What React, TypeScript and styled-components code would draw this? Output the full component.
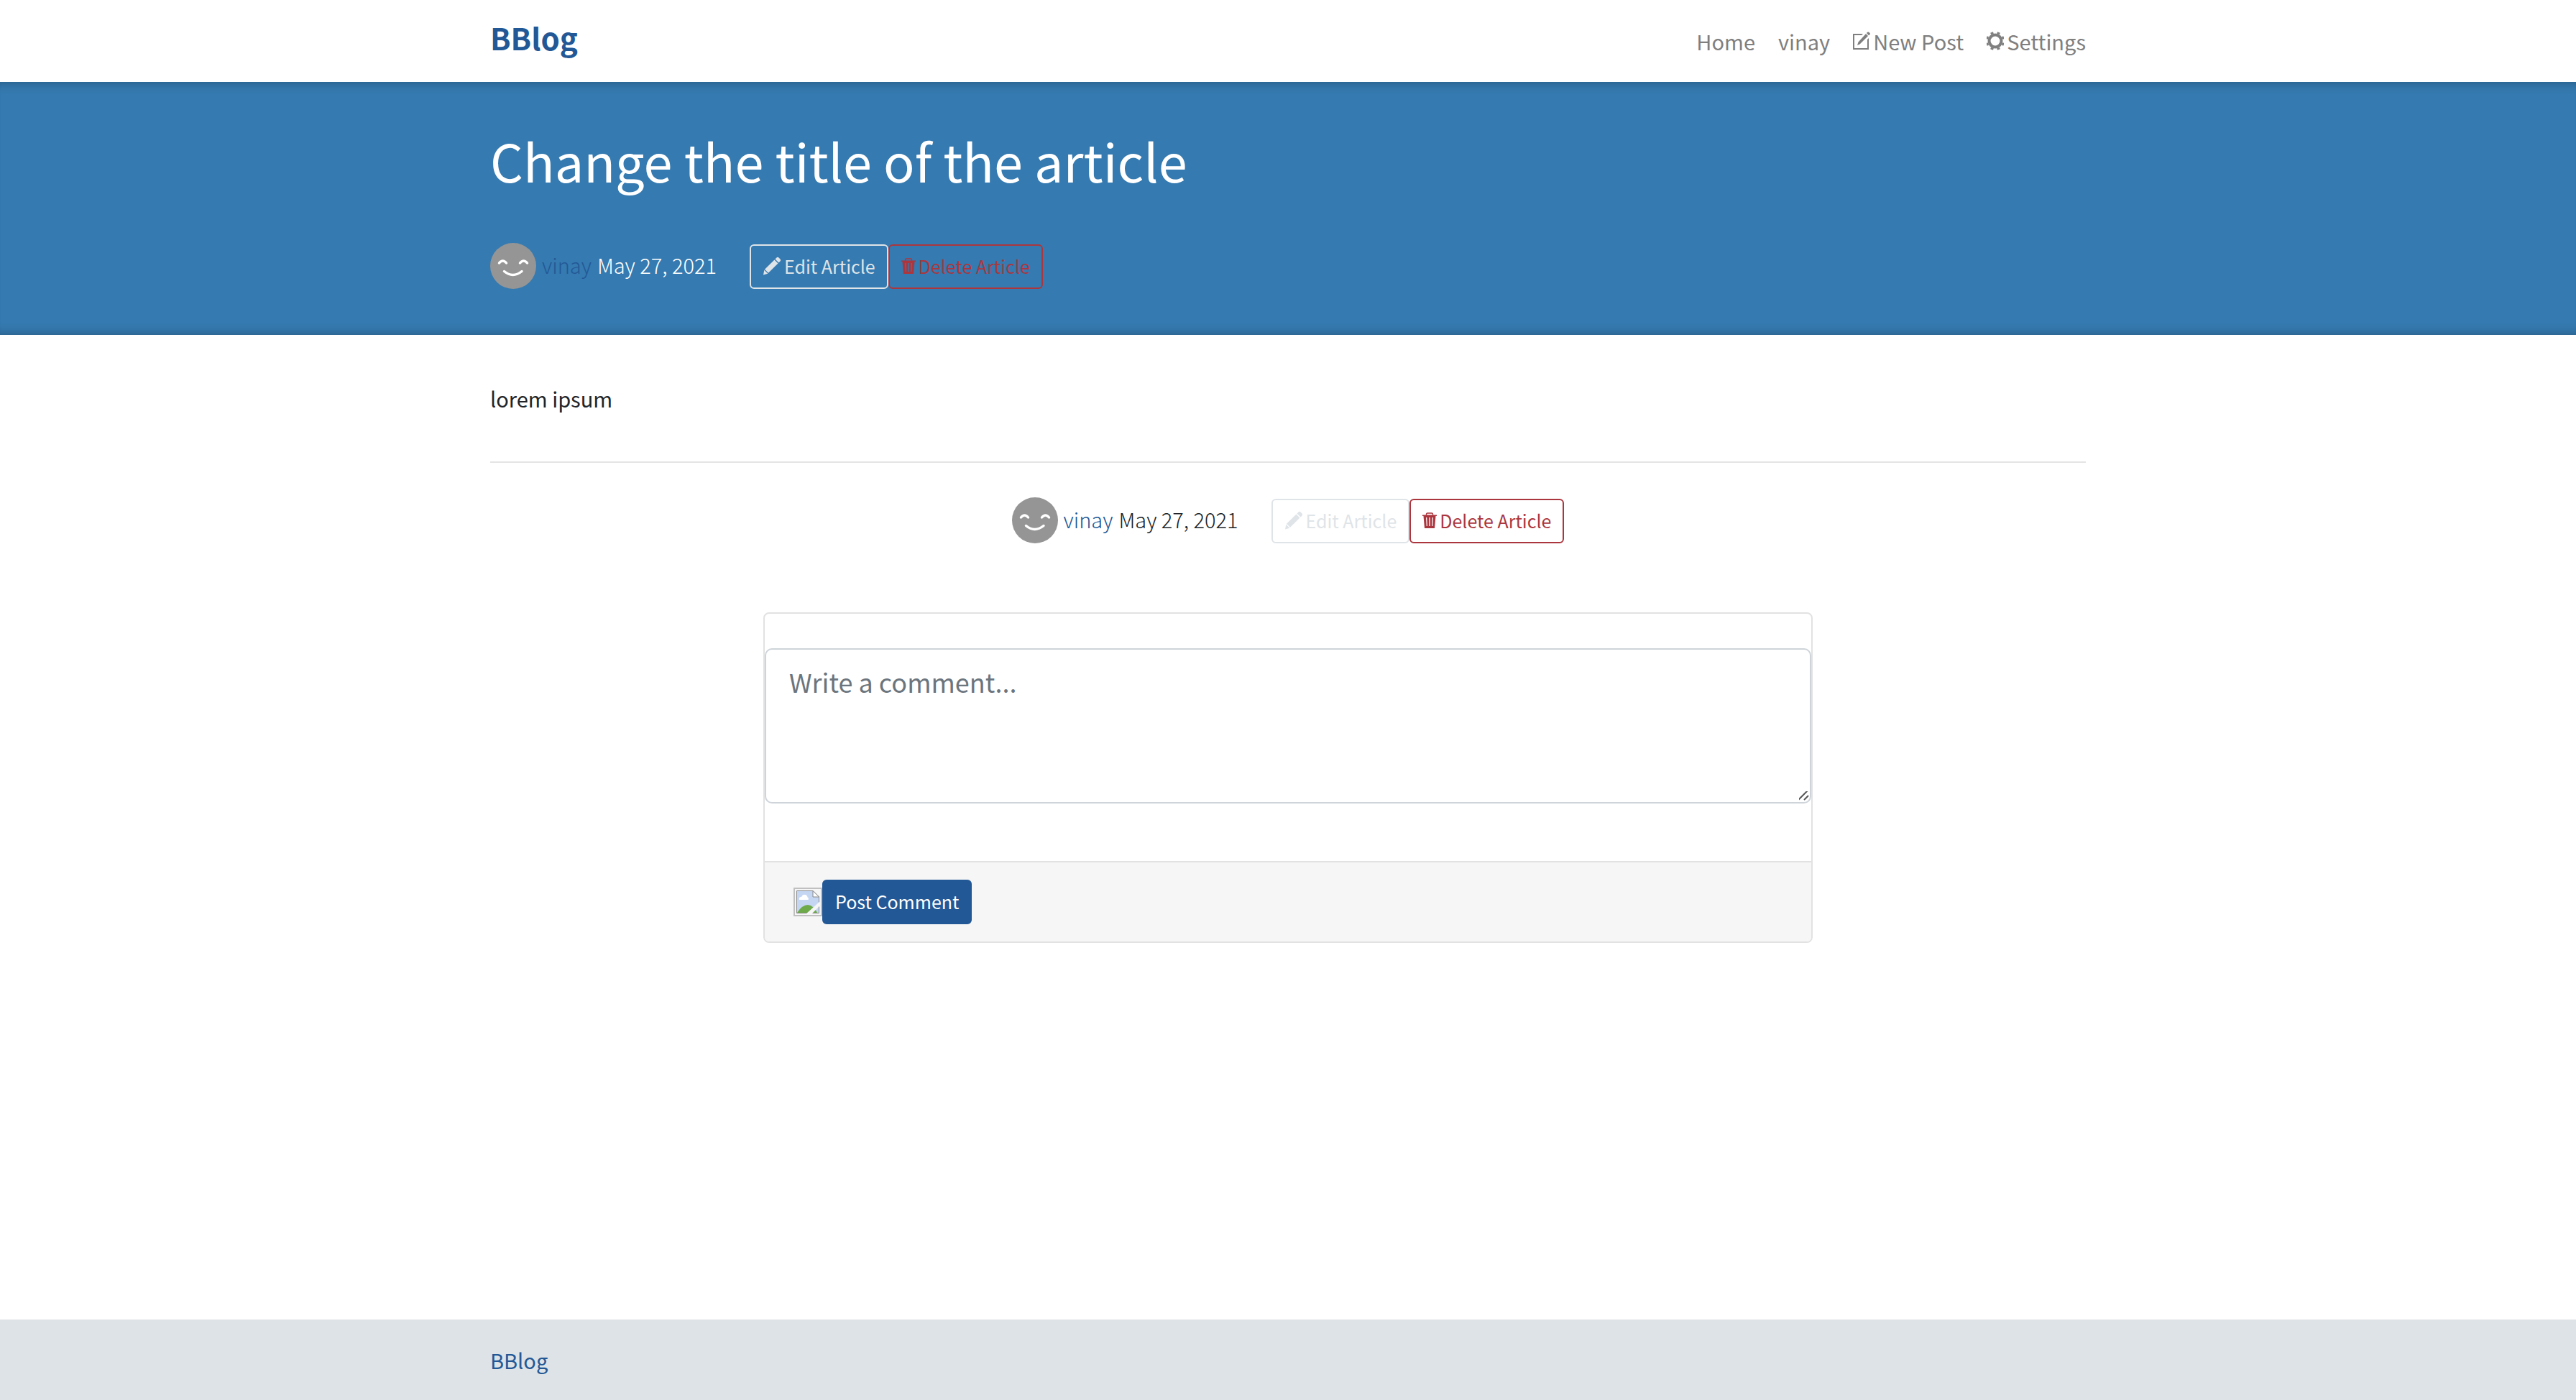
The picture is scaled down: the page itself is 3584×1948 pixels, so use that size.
import React from 'react';
import styled, { createGlobalStyle } from 'styled-components';

const BLUE = '#235896';

const GlobalStyle = createGlobalStyle`
  *, *::before, *::after { box-sizing: border-box; }
  body {
    margin: 0;
    background: #fff;
    color: #212529;
    font-family: "Noto Sans CJK SC", "Noto Sans", sans-serif;
    font-size: 29px;
    line-height: 48px;
  }
`;

const Page = styled.div`
  min-height: 100vh;
  display: flex;
  flex-direction: column;
`;

const Container = styled.div`
  width: 100%;
  max-width: 2280px;
  margin: 0 auto;
  padding: 0 30px;
`;

const Navbar = styled.nav`
  padding: 16px 0;
`;

const NavRow = styled(Container)`
  display: flex;
  align-items: center;
  justify-content: space-between;
  height: 82px;
`;

const Brand = styled.a`
  color: ${BLUE};
  font-size: 42px;
  font-weight: 700;
  line-height: 72px;
  padding-bottom: 10px;
  text-decoration: none;
`;

const NavList = styled.ul`
  display: flex;
  gap: 32px;
  margin: 0;
  padding: 0;
  list-style: none;
`;

const NavLink = styled.a`
  display: flex;
  align-items: center;
  gap: 4px;
  color: #7f7f7f;
  text-decoration: none;
`;

const Banner = styled.header`
  padding: 64px 0;
  color: #fff;
  background: #357ab0;
  box-shadow: inset 0 16px 16px -16px rgba(0, 0, 0, 0.3),
    inset 0 -16px 16px -16px rgba(0, 0, 0, 0.3);
`;

const Title = styled.h1`
  margin: 0 0 70px;
  font-size: 72px;
  font-weight: 400;
  line-height: 90px;
`;

const Meta = styled.div<{ $centered?: boolean }>`
  display: flex;
  align-items: center;
  justify-content: ${(p) => (p.$centered ? 'center' : 'flex-start')};
  height: 64px;
  font-weight: 300;
  line-height: 44px;
`;

const Byline = styled.span`
  display: flex;
  gap: 8px;
  padding: 0 0 4px 8px;
`;

const Author = styled.a`
  color: ${BLUE};
  text-decoration: none;
`;

const Actions = styled.span`
  display: flex;
  align-self: flex-end;
  margin-left: 46px;
`;

const Button = styled.button<{ $tone: 'light' | 'danger' | 'primary' }>`
  display: flex;
  align-items: center;
  gap: 4px;
  height: 62px;
  padding: 6px 16px 8px;
  border: 2px solid;
  border-radius: 6px;
  border-color: ${(p) => (p.$tone === 'light' ? '#dfe4e8' : p.$tone === 'danger' ? '#ac363e' : BLUE)};
  background: ${(p) => (p.$tone === 'primary' ? BLUE : 'transparent')};
  color: ${(p) => (p.$tone === 'light' ? '#dfe4e8' : p.$tone === 'danger' ? '#ac363e' : '#fff')};
  font-family: inherit;
  font-size: 25px;
  font-weight: 400;
  line-height: 42px;
`;

const Main = styled(Container)`
  flex: 1;
`;

const Body = styled.p`
  margin: 64px 0;
`;

const Rule = styled.hr`
  margin: 0 0 48px;
  border: 0;
  border-top: 2px solid #e4e4e4;
`;

const Card = styled.form`
  width: 1460px;
  max-width: 100%;
  margin: 96px auto 0;
  border: 2px solid #e2e2e2;
  border-radius: 8px;
  overflow: hidden;
`;

const Field = styled.div`
  padding: 48px 0 80px;
`;

const CommentBox = styled.textarea`
  display: block;
  width: 100%;
  height: 216px;
  padding: 14px 32px;
  border: 2px solid #ced4da;
  border-radius: 10px;
  background: #fff;
  color: #495057;
  font-family: inherit;
  font-size: 36px;
  line-height: 60px;
  resize: vertical;
  &::placeholder { color: #6c757d; opacity: 1; }
  &::-webkit-scrollbar { width: 30px; height: 30px; }
  &::-webkit-resizer {
    background: url("data:image/svg+xml,%3Csvg xmlns='http://www.w3.org/2000/svg' width='30' height='30'%3E%3Cpath d='M14 27L28 13M22 27L28 21' stroke='%23555' stroke-width='2'/%3E%3C/svg%3E") right bottom no-repeat;
  }
`;

const CardFooter = styled.div`
  display: flex;
  align-items: center;
  padding: 24px 40px;
  border-top: 2px solid #e2e2e2;
  background: #f6f6f6;
`;

const Footer = styled.footer`
  padding: 32px 0;
  background: #dee3e7;
`;

const FooterLink = styled.a`
  display: block;
  color: ${BLUE};
  text-decoration: none;
`;

const Svg = styled.svg`
  display: block;
  flex: none;
`;

const ComposeIcon = () => (
  <Svg width="24" height="28" viewBox="0 0 24 28" fill="currentColor" aria-hidden="true">
    <path d="M0 4h14l-2 2H2v18h18V12l2-2v16H0z" />
    <path d="M18 4l3 3L9.500 18.500 6 20l1.500-4.500zM19 3l1.200-1.200q1-.8 2 0l1.300 1.300q.8 1 0 2L22 6.200z" />
  </Svg>
);

const GearIcon = () => (
  <Svg width="24" height="26" viewBox="-12 -13 24 26" fill="none" stroke="currentColor" aria-hidden="true">
    <circle r="8.500" strokeWidth="4" />
    <path
      d="M4 -9.600L5 -12M9.600 -4L12 -5M9.600 4L12 5M4 9.600L5 12M-4 9.600L-5 12M-9.600 4L-12 5M-9.600 -4L-12 -5M-4 -9.600L-5 -12"
      strokeWidth="4"
    />
  </Svg>
);

const PencilIcon = () => (
  <Svg width="26" height="26" viewBox="0 0 26 26" fill="currentColor" aria-hidden="true">
    <path d="M16.500 4.500l5 5L8 22.800l-5-5zM17.500 3.500l2-2q1.500-1.500 3 0l2 2q1.500 1.500 0 3l-2 2zM2.300 18.700l5 5L1 25.500z" />
  </Svg>
);

const TrashIcon = () => (
  <Svg width="20" height="22" viewBox="0 0 20 22" aria-hidden="true">
    <path d="M5.500 4V2.500Q5.500 1 7 1h6q1.500 0 1.500 1.500V4" fill="none" stroke="currentColor" strokeWidth="1.400" />
    <path
      fill="currentColor"
      fillRule="evenodd"
      d="M0 3.500h20V5h-1.500L17 22H3L1.500 5H0zM5 7l.7 12h1.200L6.300 7zM9.300 7v12h1.400V7zM13.700 7l-.6 12h1.200L15 7z"
    />
  </Svg>
);

const Avatar = () => (
  <Svg width="64" height="64" viewBox="0 0 64 64" role="img" aria-label="vinay">
    <circle cx="32" cy="32" r="32" fill="#959595" />
    <path
      d="M12.500 28q5-6 10 0M41.500 28q5-6 10 0M19.500 39.500q12 10 24.500 0"
      fill="none"
      stroke="#fff"
      strokeWidth="3.500"
      strokeLinecap="round"
    />
  </Svg>
);

const MissingImage = () => (
  <Svg width="40" height="40" viewBox="0 0 40 40" role="img" aria-label="avatar">
    <path d="M1 1h38v38H1z" fill="none" stroke="#c0c0c0" strokeWidth="2" />
    <path d="M4.500 4.500H27l8.500 8.500v22.500h-31z" fill="#c5d6f3" />
    <path d="M8 17q-1-4 3-4 2-4 5-3 3 0 3.500 3.500 2 .5 1 3.500z" fill="#fff" />
    <path d="M5 35q7-11 15-11 8 1 13 11z" fill="#6faa4a" />
    <path d="M4.500 4.500H27l8.500 8.500v22.500h-31z" fill="none" stroke="#888" />
    <path d="M27 4.500V13h8.500z" fill="#fff" stroke="#888" />
    <path d="M17 37L37 19v6L25 37z" fill="#f6f6f6" />
  </Svg>
);

const ArticleMeta = ({ centered }: { centered?: boolean }) => (
  <Meta $centered={centered}>
    <Avatar />
    <Byline>
      <Author href="#vinay">vinay</Author>
      <time dateTime="2021-05-27">May 27, 2021</time>
    </Byline>
    <Actions>
      <Button type="button" $tone="light"><PencilIcon />Edit Article</Button>
      <Button type="button" $tone="danger"><TrashIcon />Delete Article</Button>
    </Actions>
  </Meta>
);

export default function App() {
  return (
    <Page>
      <GlobalStyle />
      <Navbar>
        <NavRow>
          <Brand href="#home">BBlog</Brand>
          <NavList>
            <li><NavLink href="#home">Home</NavLink></li>
            <li><NavLink href="#vinay">vinay</NavLink></li>
            <li><NavLink href="#new"><ComposeIcon />New Post</NavLink></li>
            <li><NavLink href="#settings"><GearIcon />Settings</NavLink></li>
          </NavList>
        </NavRow>
      </Navbar>
      <Banner>
        <Container>
          <Title>Change the title of the article</Title>
          <ArticleMeta />
        </Container>
      </Banner>
      <Main as="main">
        <Body>lorem ipsum</Body>
        <Rule />
        <ArticleMeta centered />
        <Card>
          <Field>
            <CommentBox aria-label="Comment" placeholder="Write a comment..." />
          </Field>
          <CardFooter>
            <MissingImage />
            <Button type="button" $tone="primary">Post Comment</Button>
          </CardFooter>
        </Card>
      </Main>
      <Footer>
        <Container>
          <FooterLink href="#home">BBlog</FooterLink>
        </Container>
      </Footer>
    </Page>
  );
}
